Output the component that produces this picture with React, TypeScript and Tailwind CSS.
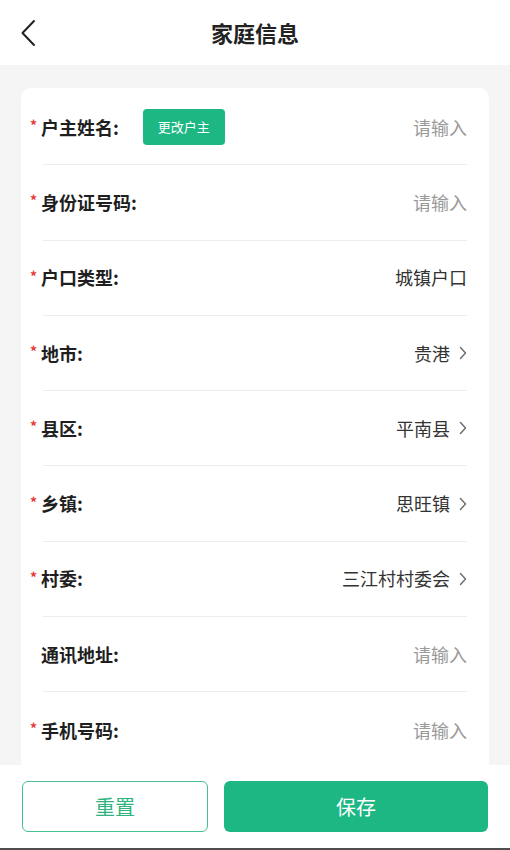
const GREEN = '#1db784';

type Row = {
  label: string;
  required: boolean;
  value?: string;
  placeholder?: boolean;
  arrow?: boolean;
  action?: string;
};

const rows: Row[] = [
  { label: '户主姓名:', required: true, value: '请输入', placeholder: true, action: '更改户主' },
  { label: '身份证号码:', required: true, value: '请输入', placeholder: true },
  { label: '户口类型:', required: true, value: '城镇户口' },
  { label: '地市:', required: true, value: '贵港', arrow: true },
  { label: '县区:', required: true, value: '平南县', arrow: true },
  { label: '乡镇:', required: true, value: '思旺镇', arrow: true },
  { label: '村委:', required: true, value: '三江村村委会', arrow: true },
  { label: '通讯地址:', required: false, value: '请输入', placeholder: true },
  { label: '手机号码:', required: true, value: '请输入', placeholder: true },
];

const ChevronRight = () => (
  <svg width="8" height="14" viewBox="0 0 8 14" className="ml-[9px] shrink-0">
    <polyline points="1.5,1.5 6.5,7 1.5,12.5" fill="none" stroke="#6b6b6b" strokeWidth="1.4" strokeLinecap="round" strokeLinejoin="round" />
  </svg>
);

const FormRow = ({ row, last }: { row: Row; last: boolean }) => (
  <div className={`mx-[22px] h-[75.3px] flex items-center ${last ? '' : 'border-b border-[#ededed]'}`}>
    <span className="-ml-[13px] w-[11px] text-[#e53935] text-[14px] font-bold leading-none pb-[4px]">
      {row.required ? '*' : ''}
    </span>
    <span className="text-[18px] font-bold text-[#1f1f1f]">{row.label}</span>
    {row.action && (
      <button className="ml-[24px] h-[36px] px-[15px] rounded-[4px] text-white text-[13px]" style={{ backgroundColor: GREEN }}>
        {row.action}
      </button>
    )}
    <div className="ml-auto flex items-center">
      <span className={`text-[18px] ${row.placeholder ? 'text-[#9a9a9a]' : 'text-[#333]'}`}>{row.value}</span>
      {row.arrow && <ChevronRight />}
    </div>
  </div>
);

export default function App() {
  return (
    <div
      className="w-[510px] h-[850px] flex flex-col bg-[#f5f5f5] overflow-hidden"
      style={{ fontFamily: '"Noto Sans CJK SC", "Noto Sans", sans-serif' }}
    >
      {/* Header */}
      <div className="h-[65px] shrink-0 bg-white flex items-center relative">
        <svg width="16" height="28" viewBox="0 0 16 28" className="ml-[20px]">
          <polyline points="14,2 2.5,14 14,26" fill="none" stroke="#222" strokeWidth="2" strokeLinecap="round" strokeLinejoin="round" />
        </svg>
        <h1 className="absolute left-0 right-0 text-center text-[22px] font-bold text-[#222] pointer-events-none">家庭信息</h1>
      </div>

      {/* Form */}
      <div className="flex-1 overflow-hidden pt-[23px] px-[21px]">
        <div className="bg-white rounded-[10px] pt-[2px] pb-[30px]">
          {rows.map((r, i) => (
            <FormRow key={r.label} row={r} last={i === rows.length - 1} />
          ))}
        </div>
      </div>

      {/* Footer */}
      <div className="h-[83px] shrink-0 bg-white flex items-center gap-[16px] px-[22px]">
        <button
          className="w-[186px] h-[51px] rounded-[6px] border-[1.5px] text-[20px] bg-white"
          style={{ borderColor: '#46c08f', color: '#2fb47f' }}
        >
          重置
        </button>
        <button className="flex-1 h-[51px] rounded-[6px] text-white text-[20px]" style={{ backgroundColor: GREEN }}>
          保存
        </button>
      </div>
      <div className="h-[2px] shrink-0 bg-[#4d4d4d]" />
    </div>
  );
}
